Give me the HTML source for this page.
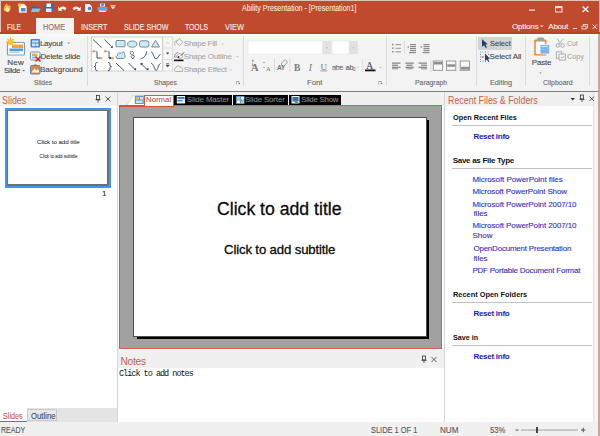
<!DOCTYPE html>
<html><head><meta charset="utf-8">
<style>
*{margin:0;padding:0;box-sizing:border-box}
html,body{width:600px;height:436px;overflow:hidden;background:#f0f0f0;font-family:"Liberation Sans",sans-serif}
.a{position:absolute}
.t{position:absolute;white-space:nowrap;line-height:1;-webkit-text-stroke:0.1px currentColor}
svg{position:absolute;overflow:visible}
</style></head><body>
<div class="a" style="left:0px;top:0px;width:600px;height:34px;background:#bf4a2e;"></div>
<div class="a" style="left:0px;top:0px;width:600px;height:1px;background:#e3c2b8;"></div>
<div class="a" style="left:0px;top:0px;width:1px;height:34px;background:#e3c2b8;"></div>
<div class="a" style="left:599px;top:0px;width:1px;height:34px;background:#dcb2a6;"></div>
<div class="a" style="left:36px;top:18px;width:38px;height:16px;background:#f3f3f3;"></div>
<div class="t" style="left:242.00px;top:4.00px;font-family:'Liberation Sans',sans-serif;font-size:8.5px;letter-spacing:0.000px;color:#f8e6df;transform:scaleX(0.8320);transform-origin:0 0">Ability Presentation - [Presentation1]</div>
<div class="t" style="left:7.24px;top:23.00px;font-family:'Liberation Sans',sans-serif;font-size:8.7px;letter-spacing:0.000px;color:#fdf0ea;transform:scaleX(0.7648);transform-origin:0 0">FILE</div>
<div class="t" style="left:43.15px;top:23.00px;font-family:'Liberation Sans',sans-serif;font-size:8.7px;letter-spacing:0.000px;color:#8d6a6e;transform:scaleX(0.8486);transform-origin:0 0">HOME</div>
<div class="t" style="left:81.17px;top:23.00px;font-family:'Liberation Sans',sans-serif;font-size:8.7px;letter-spacing:0.000px;color:#fdf0ea;transform:scaleX(0.8317);transform-origin:0 0">INSERT</div>
<div class="t" style="left:123.69px;top:23.00px;font-family:'Liberation Sans',sans-serif;font-size:8.7px;letter-spacing:0.000px;color:#fdf0ea;transform:scaleX(0.8148);transform-origin:0 0">SLIDE SHOW</div>
<div class="t" style="left:185.30px;top:23.00px;font-family:'Liberation Sans',sans-serif;font-size:8.7px;letter-spacing:0.000px;color:#fdf0ea;transform:scaleX(0.7855);transform-origin:0 0">TOOLS</div>
<div class="t" style="left:225.30px;top:23.00px;font-family:'Liberation Sans',sans-serif;font-size:8.7px;letter-spacing:0.000px;color:#fdf0ea;transform:scaleX(0.8539);transform-origin:0 0">VIEW</div>
<div class="t" style="left:512.00px;top:22.50px;font-family:'Liberation Sans',sans-serif;font-size:8px;letter-spacing:-0.150px;color:#fdf0ea">Options</div>
<div class="t" style="left:548.30px;top:22.50px;font-family:'Liberation Sans',sans-serif;font-size:8px;letter-spacing:-0.250px;color:#fdf0ea">About</div>
<div class="a" style="left:0px;top:34px;width:600px;height:57px;background:linear-gradient(#fbfbfb,#f3f3f3 6px,#f3f3f3);"></div>
<div class="a" style="left:74px;top:32px;width:526px;height:2px;background:#b9441f;"></div>
<div class="a" style="left:0px;top:32px;width:36px;height:2px;background:#b9441f;"></div>
<div class="a" style="left:0px;top:91px;width:600px;height:1px;background:#7d7d7d;"></div>
<div class="a" style="left:87px;top:36px;width:1px;height:50px;background:#dcdcdc;"></div>
<div class="a" style="left:243px;top:36px;width:1px;height:50px;background:#dcdcdc;"></div>
<div class="a" style="left:386px;top:36px;width:1px;height:50px;background:#dcdcdc;"></div>
<div class="a" style="left:476px;top:36px;width:1px;height:50px;background:#dcdcdc;"></div>
<div class="a" style="left:525px;top:36px;width:1px;height:50px;background:#dcdcdc;"></div>
<div class="a" style="left:589px;top:36px;width:1px;height:50px;background:#dcdcdc;"></div>
<div class="a" style="left:478px;top:37px;width:34px;height:13px;background:#d3d3d3;"></div>
<div class="t" style="left:7.30px;top:59.30px;font-family:'Liberation Sans',sans-serif;font-size:8px;letter-spacing:0.250px;color:#444">New</div>
<div class="t" style="left:3.90px;top:66.80px;font-family:'Liberation Sans',sans-serif;font-size:8px;letter-spacing:-0.300px;color:#444">Slide</div>
<div class="t" style="left:39.90px;top:39.90px;font-family:'Liberation Sans',sans-serif;font-size:8px;letter-spacing:-0.260px;color:#444">Layout</div>
<div class="t" style="left:40.50px;top:52.80px;font-family:'Liberation Sans',sans-serif;font-size:8px;letter-spacing:-0.164px;color:#444">Delete slide</div>
<div class="t" style="left:40.00px;top:65.60px;font-family:'Liberation Sans',sans-serif;font-size:8px;letter-spacing:0.000px;color:#444">Background</div>
<div class="t" style="left:34.15px;top:78.80px;font-family:'Liberation Sans',sans-serif;font-size:7.8px;letter-spacing:0.000px;color:#666;transform:scaleX(0.8500);transform-origin:0 0">Slides</div>
<div class="t" style="left:183.80px;top:40.00px;font-family:'Liberation Sans',sans-serif;font-size:8px;letter-spacing:-0.255px;color:#a8a8a8">Shape Fill</div>
<div class="t" style="left:183.80px;top:53.00px;font-family:'Liberation Sans',sans-serif;font-size:8px;letter-spacing:-0.217px;color:#a8a8a8">Shape Outline</div>
<div class="t" style="left:183.80px;top:66.30px;font-family:'Liberation Sans',sans-serif;font-size:8px;letter-spacing:-0.236px;color:#a8a8a8">Shape Effect</div>
<div class="t" style="left:153.94px;top:78.80px;font-family:'Liberation Sans',sans-serif;font-size:7.8px;letter-spacing:0.000px;color:#666;transform:scaleX(0.8629);transform-origin:0 0">Shapes</div>
<div class="t" style="left:307.00px;top:78.90px;font-family:'Liberation Sans',sans-serif;font-size:7.8px;letter-spacing:-0.100px;color:#666">Font</div>
<div class="t" style="left:414.62px;top:78.90px;font-family:'Liberation Sans',sans-serif;font-size:7.8px;letter-spacing:0.000px;color:#666;transform:scaleX(0.8814);transform-origin:0 0">Paragraph</div>
<div class="t" style="left:489.67px;top:40.00px;font-family:'Liberation Sans',sans-serif;font-size:8px;letter-spacing:0.000px;color:#444;transform:scaleX(0.9327);transform-origin:0 0">Select</div>
<div class="t" style="left:489.60px;top:53.00px;font-family:'Liberation Sans',sans-serif;font-size:8px;letter-spacing:-0.123px;color:#444">Select All</div>
<div class="t" style="left:489.67px;top:78.80px;font-family:'Liberation Sans',sans-serif;font-size:7.8px;letter-spacing:0.000px;color:#666;transform:scaleX(0.9278);transform-origin:0 0">Editing</div>
<div class="t" style="left:531.80px;top:59.00px;font-family:'Liberation Sans',sans-serif;font-size:8px;letter-spacing:-0.200px;color:#444">Paste</div>
<div class="t" style="left:566.90px;top:40.00px;font-family:'Liberation Sans',sans-serif;font-size:8px;letter-spacing:0.000px;color:#a8a8a8;transform:scaleX(0.8571);transform-origin:0 0">Cut</div>
<div class="t" style="left:566.90px;top:53.00px;font-family:'Liberation Sans',sans-serif;font-size:8px;letter-spacing:0.000px;color:#a8a8a8;transform:scaleX(0.9033);transform-origin:0 0">Copy</div>
<div class="t" style="left:543.20px;top:78.80px;font-family:'Liberation Sans',sans-serif;font-size:7.8px;letter-spacing:0.000px;color:#666;transform:scaleX(0.8896);transform-origin:0 0">Clipboard</div>
<div class="a" style="left:0px;top:92px;width:117px;height:14px;background:#f0f0f0;"></div>
<div class="a" style="left:0px;top:106px;width:117px;height:302px;background:#ffffff;"></div>
<div class="a" style="left:117px;top:92px;width:1px;height:330px;background:#d6d6d6;"></div>
<div class="t" style="left:2.33px;top:95.60px;font-family:'Liberation Sans',sans-serif;font-size:10.2px;letter-spacing:0.000px;color:#c4624c;-webkit-text-stroke:0;transform:scaleX(0.8731);transform-origin:0 0">Slides</div>
<div class="a" style="left:5px;top:108px;width:106px;height:80px;background:#ffffff;border:2px solid #3d97f0;box-sizing:border-box"></div>
<div class="a" style="left:7px;top:110px;width:102px;height:76px;background:#ffffff;border:1px solid #707070;border-right-width:2px;border-bottom-width:2px;box-sizing:border-box"></div>
<div class="t" style="left:37.00px;top:138.60px;font-family:'Liberation Sans',sans-serif;font-size:6.2px;letter-spacing:-0.059px;color:#111;-webkit-text-stroke:0">Click to add title</div>
<div class="t" style="left:39.60px;top:154.60px;font-family:'Liberation Sans',sans-serif;font-size:4.6px;letter-spacing:-0.095px;color:#111;-webkit-text-stroke:0">Click to add subtitle</div>
<div class="t" style="left:102.00px;top:190.00px;font-family:'Liberation Sans',sans-serif;font-size:8px;letter-spacing:0.000px;color:#222">1</div>
<div class="a" style="left:0px;top:408px;width:117px;height:14px;background:#e4e4e4;"></div>
<div class="a" style="left:0px;top:408px;width:27px;height:14px;background:#ffffff;"></div>
<div class="a" style="left:0px;top:421px;width:27px;height:1px;background:#d6532f;"></div>
<div class="a" style="left:27px;top:409px;width:30px;height:12px;background:#e8e8e8;border:1px solid #c8c8c8;box-sizing:border-box"></div>
<div class="t" style="left:2.64px;top:412.00px;font-family:'Liberation Sans',sans-serif;font-size:8.4px;letter-spacing:0.000px;color:#c4624c;transform:scaleX(0.8636);transform-origin:0 0">Slides</div>
<div class="t" style="left:30.50px;top:412.00px;font-family:'Liberation Sans',sans-serif;font-size:8.4px;letter-spacing:0.000px;color:#444;transform:scaleX(0.9231);transform-origin:0 0">Outline</div>
<div class="a" style="left:118px;top:92px;width:326px;height:13px;background:#f0f0f0;"></div>
<div class="a" style="left:118px;top:105px;width:326px;height:317px;background:#ffffff;"></div>
<div class="a" style="left:119px;top:105px;width:323px;height:244px;background:#a1a1a1;border:1px solid #cf6352;box-sizing:border-box"></div>
<div class="a" style="left:119px;top:105px;width:55px;height:2px;background:#dd5030;"></div>
<div class="a" style="left:119px;top:105px;width:1px;height:244px;background:#d9583c;"></div>
<div class="a" style="left:137px;top:120px;width:292px;height:219px;background:#000000;"></div>
<div class="a" style="left:133px;top:117px;width:294px;height:220px;background:#ffffff;border:1px solid #505050;box-sizing:border-box"></div>
<div class="t" style="left:217.05px;top:200.10px;font-family:'Liberation Sans',sans-serif;font-size:18.5px;letter-spacing:0.000px;color:#0a0a0a;-webkit-text-stroke:0.3px currentColor;transform:scaleX(0.9535);transform-origin:0 0">Click to add title</div>
<div class="t" style="left:224.00px;top:242.60px;font-family:'Liberation Sans',sans-serif;font-size:13.2px;letter-spacing:-0.145px;color:#0a0a0a;-webkit-text-stroke:0.3px currentColor">Click to add subtitle</div>
<div class="a" style="left:118px;top:350px;width:326px;height:18px;background:#f0f0f0;"></div>
<div class="t" style="left:120.50px;top:356.50px;font-family:'Liberation Sans',sans-serif;font-size:10.2px;letter-spacing:-0.250px;color:#c4624c;-webkit-text-stroke:0">Notes</div>
<div class="t" style="left:119.00px;top:369.60px;font-family:'Liberation Mono',monospace;font-size:8.5px;letter-spacing:-1.000px;color:#111;-webkit-text-stroke:0">Click to add notes</div>
<div class="a" style="left:444px;top:92px;width:1px;height:330px;background:#d6d6d6;"></div>
<div class="a" style="left:144px;top:95px;width:30px;height:11px;background:#ffffff;border:1px solid #d65a3c;border-bottom:none;box-sizing:border-box"></div>
<div class="a" style="left:174px;top:95px;width:58px;height:10px;background:#000000;"></div>
<div class="a" style="left:233px;top:95px;width:55px;height:10px;background:#000000;"></div>
<div class="a" style="left:289px;top:95px;width:52px;height:10px;background:#000000;"></div>
<div class="t" style="left:146.00px;top:96.00px;font-family:'Liberation Sans',sans-serif;font-size:7.8px;letter-spacing:0.000px;color:#c0573f">Normal</div>
<div class="t" style="left:187.00px;top:96.00px;font-family:'Liberation Sans',sans-serif;font-size:7.8px;letter-spacing:-0.101px;color:#8a8a8a">Slide Master</div>
<div class="t" style="left:245.00px;top:96.00px;font-family:'Liberation Sans',sans-serif;font-size:7.8px;letter-spacing:-0.091px;color:#8a8a8a">Slide Sorter</div>
<div class="t" style="left:301.30px;top:96.00px;font-family:'Liberation Sans',sans-serif;font-size:7.8px;letter-spacing:-0.201px;color:#8a8a8a">Slide Show</div>
<div class="a" style="left:445px;top:92px;width:148px;height:14px;background:#f0f0f0;"></div>
<div class="a" style="left:445px;top:106px;width:148px;height:316px;background:#ffffff;"></div>
<div class="a" style="left:593px;top:92px;width:1px;height:330px;background:#e0e0e0;"></div>
<div class="a" style="left:594px;top:92px;width:5px;height:330px;background:#f7f3ee;"></div>
<div class="t" style="left:448.43px;top:95.50px;font-family:'Liberation Sans',sans-serif;font-size:10.2px;letter-spacing:0.000px;color:#c4624c;-webkit-text-stroke:0;transform:scaleX(0.8705);transform-origin:0 0">Recent Files &amp; Folders</div>
<div class="a" style="left:452px;top:125px;width:140px;height:1px;background:#c2c2c2;"></div>
<div class="a" style="left:452px;top:168px;width:140px;height:1px;background:#c2c2c2;"></div>
<div class="a" style="left:452px;top:302px;width:140px;height:1px;background:#c2c2c2;"></div>
<div class="a" style="left:452px;top:345px;width:140px;height:1px;background:#c2c2c2;"></div>
<div class="t" style="left:452.80px;top:113.70px;font-family:'Liberation Sans',sans-serif;font-size:8px;letter-spacing:0.000px;color:#111;font-weight:bold;-webkit-text-stroke:0;transform:scaleX(0.9143);transform-origin:0 0">Open Recent Files</div>
<div class="t" style="left:473.40px;top:133.00px;font-family:'Liberation Sans',sans-serif;font-size:8px;letter-spacing:-0.267px;color:#1b1bc4;font-weight:bold;-webkit-text-stroke:0">Reset info</div>
<div class="t" style="left:452.70px;top:157.00px;font-family:'Liberation Sans',sans-serif;font-size:8px;letter-spacing:-0.281px;color:#111;font-weight:bold;-webkit-text-stroke:0">Save as File Type</div>
<div class="t" style="left:472.40px;top:175.70px;font-family:'Liberation Sans',sans-serif;font-size:8px;letter-spacing:-0.068px;color:#2f2fc0">Microsoft PowerPoint files</div>
<div class="t" style="left:472.40px;top:187.80px;font-family:'Liberation Sans',sans-serif;font-size:8px;letter-spacing:-0.134px;color:#2f2fc0">Microsoft PowerPoint Show</div>
<div class="t" style="left:472.40px;top:200.50px;font-family:'Liberation Sans',sans-serif;font-size:8px;letter-spacing:-0.096px;color:#2f2fc0">Microsoft PowerPoint 2007/10</div>
<div class="t" style="left:473.40px;top:210.00px;font-family:'Liberation Sans',sans-serif;font-size:8px;letter-spacing:0.000px;color:#2f2fc0">files</div>
<div class="t" style="left:472.40px;top:222.40px;font-family:'Liberation Sans',sans-serif;font-size:8px;letter-spacing:-0.096px;color:#2f2fc0">Microsoft PowerPoint 2007/10</div>
<div class="t" style="left:472.40px;top:232.20px;font-family:'Liberation Sans',sans-serif;font-size:8px;letter-spacing:0.000px;color:#2f2fc0">Show</div>
<div class="t" style="left:473.40px;top:244.90px;font-family:'Liberation Sans',sans-serif;font-size:8px;letter-spacing:-0.217px;color:#2f2fc0">OpenDocument Presentation</div>
<div class="t" style="left:473.40px;top:254.70px;font-family:'Liberation Sans',sans-serif;font-size:8px;letter-spacing:0.000px;color:#2f2fc0">files</div>
<div class="t" style="left:472.40px;top:267.00px;font-family:'Liberation Sans',sans-serif;font-size:8px;letter-spacing:-0.230px;color:#2f2fc0">PDF Portable Document Format</div>
<div class="t" style="left:452.70px;top:290.60px;font-family:'Liberation Sans',sans-serif;font-size:8px;letter-spacing:0.000px;color:#111;font-weight:bold;-webkit-text-stroke:0;transform:scaleX(0.9223);transform-origin:0 0">Recent Open Folders</div>
<div class="t" style="left:473.40px;top:310.00px;font-family:'Liberation Sans',sans-serif;font-size:8px;letter-spacing:-0.267px;color:#1b1bc4;font-weight:bold;-webkit-text-stroke:0">Reset info</div>
<div class="t" style="left:452.70px;top:333.80px;font-family:'Liberation Sans',sans-serif;font-size:8px;letter-spacing:0.000px;color:#111;font-weight:bold;-webkit-text-stroke:0;transform:scaleX(0.9004);transform-origin:0 0">Save in</div>
<div class="t" style="left:473.40px;top:353.10px;font-family:'Liberation Sans',sans-serif;font-size:8px;letter-spacing:-0.267px;color:#1b1bc4;font-weight:bold;-webkit-text-stroke:0">Reset info</div>
<div class="a" style="left:0px;top:422px;width:600px;height:14px;background:#f0f0f0;"></div>
<div class="t" style="left:1.19px;top:426.30px;font-family:'Liberation Sans',sans-serif;font-size:8.6px;letter-spacing:0.000px;color:#555;transform:scaleX(0.8140);transform-origin:0 0">READY</div>
<div class="t" style="left:370.73px;top:426.00px;font-family:'Liberation Sans',sans-serif;font-size:8.6px;letter-spacing:0.000px;color:#555;transform:scaleX(0.8671);transform-origin:0 0">SLIDE 1 OF 1</div>
<div class="t" style="left:440.06px;top:426.00px;font-family:'Liberation Sans',sans-serif;font-size:8.6px;letter-spacing:0.000px;color:#555;transform:scaleX(0.9444);transform-origin:0 0">NUM</div>
<div class="t" style="left:490.40px;top:426.00px;font-family:'Liberation Sans',sans-serif;font-size:8.6px;letter-spacing:0.000px;color:#555;transform:scaleX(0.8902);transform-origin:0 0">53%</div>
<div class="a" style="left:598px;top:34px;width:2px;height:402px;background:#c9a79c;"></div>
<svg width="600" height="436" viewBox="0 0 600 436" style="left:0;top:0">
<!-- ===== quick access toolbar ===== -->
<g>
 <path d="M4 11 C3 8 5 5 7 3 C7 6 9 6 10 5 C11 7 11 10 9 12 Z" fill="#f7b23b"/>
 <path d="M5.5 11 C5 9 6.5 7 7.5 6 C8 8 9.5 8 9.5 9 C9.5 10.5 8.5 11.5 7.5 12 Z" fill="#fde9a8"/>
 <path d="M19 4 h5 l2.5 2.5 v6 h-7.5 z" fill="#fdfdfd" stroke="#d8d8d8" stroke-width="0.5"/>
 <rect x="21" y="8" width="4.5" height="3.5" fill="#4d8fd6"/>
 <circle cx="19.5" cy="5" r="1.8" fill="#f6c43c"/>
 <path d="M31 6 h3 l1 1 h5 v5 h-9 z" fill="#2e6ea6"/>
 <path d="M32 8.5 h8.5 l-1.5 3.5 h-8 z" fill="#7cc3ee"/>
 <rect x="44.5" y="3.5" width="8.5" height="8.5" fill="#2f6fb5"/>
 <rect x="46.5" y="3.5" width="4.5" height="3.5" fill="#ffffff"/>
 <rect x="46" y="8.5" width="5.5" height="3.5" fill="#dfeefa"/>
 <path d="M59 9.5 C60 6 64 5.5 66.5 8 L65 10.5 C63.5 8.5 61.5 8.5 60.5 10.5 Z" fill="#f2f2f2"/>
 <path d="M58 6.5 L58.5 11 L62.5 10.5 Z" fill="#f2f2f2"/>
 <path d="M80 9.5 C79 6 75 5.5 72.5 8 L74 10.5 C75.5 8.5 77.5 8.5 78.5 10.5 Z" fill="#f2f2f2"/>
 <path d="M81 6.5 L80.5 11 L76.5 10.5 Z" fill="#f2f2f2"/>
 <path d="M85 4 h4.5 l2 2 v6 h-6.5 z" fill="#fafafa"/>
 <circle cx="89.5" cy="8.5" r="2.3" fill="#3b8ed4" stroke="#ffffff" stroke-width="0.8"/>
 <rect x="100" y="3.5" width="5" height="3" fill="#ffffff"/>
 <circle cx="102.5" cy="4.5" r="1.8" fill="#4e9ad8"/>
 <path d="M97.5 7 h10 v3.5 h-10 z" fill="#5aa6df"/>
 <path d="M98.5 10.5 h8 l-1 1.5 h-6 z" fill="#e8f2fa"/>
 <path d="M110.5 6.5 h5 l-2.5 3 z" fill="#f4e4de"/>
 <rect x="110.5" y="5" width="5" height="0.8" fill="#f4e4de"/>
</g>
<!-- window controls -->
<rect x="529" y="9.5" width="6" height="1.2" fill="#f6e6e0"/>
<rect x="555.5" y="6.5" width="6.5" height="5.5" fill="none" stroke="#f6e6e0" stroke-width="1"/>
<rect x="555.5" y="6.5" width="6.5" height="1.6" fill="#f6e6e0"/>
<path d="M582.5 6.5 L588.5 12 M588.5 6.5 L582.5 12" stroke="#fbf0ec" stroke-width="1.5"/>
<path d="M540 25.5 h3.5 l-1.75 2 z" fill="#f6e6e0"/>
<rect x="573" y="28" width="4" height="1" fill="#f6e6e0"/>
<rect x="583.5" y="24.5" width="4" height="3.5" fill="none" stroke="#f6e6e0" stroke-width="0.8"/>
<rect x="582" y="26" width="4" height="3" fill="#bf4a2e" stroke="#f6e6e0" stroke-width="0.8"/>
<path d="M592.5 24.5 L597 29 M597 24.5 L592.5 29" stroke="#f6e6e0" stroke-width="1"/>

<!-- ===== Slides group ===== -->
<rect x="7.5" y="42.5" width="17" height="12.5" rx="1" fill="#ffffff" stroke="#7a9cc2" stroke-width="1.2"/>
<rect x="12" y="44.5" width="11" height="3.5" fill="#f3a23c"/>
<rect x="9.5" y="48.5" width="13.5" height="2.6" fill="#4f9be0"/>
<rect x="9.5" y="51.5" width="10" height="1.5" fill="#a9d0f0"/>
<circle cx="10.5" cy="42" r="3" fill="#f9c52f"/>
<path d="M10.5 37.5 v1.6 M6 42 h1.6 M7.4 38.9 l1.1 1.1 M13.6 38.9 l-1.1 1.1 M7.4 45.1 l1.1 -1.1 M15 42 h-1.6" stroke="#f29a1f" stroke-width="1"/>
<path d="M22.5 70 h2.5 l-1.25 1.5 z" fill="#666"/>
<!-- layout -->
<rect x="30.5" y="39" width="9.5" height="8.5" rx="0.8" fill="#3f8bd0"/>
<rect x="32" y="40.5" width="6.5" height="2" fill="#cfe6f8"/>
<rect x="32" y="43.5" width="3" height="2.6" fill="#cfe6f8"/>
<rect x="35.5" y="43.5" width="3" height="2.6" fill="#cfe6f8"/>
<path d="M67.5 42.5 h2.5 l-1.25 1.5 z" fill="#777"/>
<!-- delete slide -->
<rect x="30.5" y="52" width="9.5" height="8" rx="0.8" fill="#ffffff" stroke="#6a8fb5" stroke-width="1"/>
<rect x="32" y="53.5" width="5.5" height="2.5" fill="#f5a54a"/>
<rect x="32" y="56.5" width="4" height="2" fill="#7fb4e2"/>
<path d="M35.5 56.5 L40.5 61.5 M40.5 56.5 L35.5 61.5" stroke="#e0201b" stroke-width="1.4"/>
<!-- background -->
<rect x="30.5" y="65.5" width="9.5" height="8.5" rx="1" fill="#e9853a" stroke="#5f88b5" stroke-width="1"/>
<path d="M31.5 72.5 L34.5 68.5 L36.5 70.5 L38 69 L39.5 72.5 Z" fill="#ffffff"/>
<rect x="33.5" y="64.5" width="3.5" height="1.6" fill="#5f88b5"/>

<!-- ===== Shapes gallery ===== -->
<rect x="91.5" y="37" width="71" height="34" fill="#ffffff" stroke="#cfcfcf" stroke-width="1"/>
<rect x="163" y="37" width="9.5" height="34" fill="#f7f7f7" stroke="#d6d6d6" stroke-width="0.8"/>
<path d="M163 48 h9.5 M163 59.5 h9.5" stroke="#d6d6d6" stroke-width="0.8"/>
<path d="M166.5 43.5 l1.2 -1.3 l1.2 1.3" fill="none" stroke="#b0b0b0" stroke-width="0.7"/>
<path d="M166 52.5 h3.3 l-1.65 2 z" fill="#333"/>
<path d="M166 63.5 h3.3 M166 65 h3.3 l-1.65 2 z" stroke="#444" stroke-width="0.6" fill="#444"/>
<g stroke="#27445e" stroke-width="0.9" fill="none">
 <path d="M93 39.5 L101.5 47.5"/>
 <path d="M104.5 39.5 L111.5 46.5"/>
 <path d="M97 51.5 v6.5 h4"/>
 <path d="M109 51.5 v6.5 h2"/>
 <path d="M97.5 62.5 c-1.5 0 -2 0.5 -2 1.8 v1.5 c0 0.6 -0.6 0.7 -1.5 0.8 c0.9 0.1 1.5 0.2 1.5 0.8 v1.5 c0 1.3 0.5 1.8 2 1.8"/>
 <path d="M108 62.5 c1.5 0 2 0.5 2 1.8 v1.5 c0 0.6 0.6 0.7 1.5 0.8 c-0.9 0.1 -1.5 0.2 -1.5 0.8 v1.5 c0 1.3 -0.5 1.8 -2 1.8"/>
 <path d="M116 63 L124 70.5"/>
 <path d="M128.5 63 L135 69.5"/>
 <path d="M141.5 64 L147 69.5"/>
 <path d="M140.5 59 C144 58 146.5 55 146.5 51.5"/>
 <path d="M151 52 C153 51.5 154 59 156 59 C158 59 158 55 160.5 54.5"/>
 <path d="M151 63 C153 63 155 70.5 156 70.5 C157.5 70.5 158.5 64 160.5 63.5"/>
</g>
<path d="M110.5 47.8 L112.8 48 L112.5 45.5 Z" fill="#1f3b57"/>
<path d="M135.8 70.6 L136.2 68 L133.8 69 Z" fill="#1f3b57"/>
<path d="M148.2 70.6 L148.5 68 L146 69 Z" fill="#1f3b57"/>
<path d="M140.5 63 L143.2 63.2 L141 65.5 Z" fill="#1f3b57"/>
<path d="M112 58 L109.5 56.5 L109.5 59.5 Z" fill="#1f3b57"/>
<g fill="#f0a040"><circle cx="93.5" cy="51.3" r="1.2"/><circle cx="101" cy="58.3" r="1.2"/><circle cx="105.2" cy="51.3" r="1.2"/><circle cx="112.5" cy="58.3" r="1.2"/></g>
<path d="M93.5 51.3 h3.5" stroke="#7a98b8" stroke-width="0.8"/>
<path d="M105.2 51.3 h3.8" stroke="#7a98b8" stroke-width="0.8"/>
<g stroke="#6f7f8c" stroke-width="0.9" fill="#c7ecf6">
 <rect x="116" y="40.5" width="9" height="6.3" rx="0.5"/>
 <ellipse cx="132.2" cy="44.1" rx="4.6" ry="3.1"/>
 <rect x="139.5" y="40.8" width="9.4" height="6.3" rx="2"/>
 <path d="M155.5 40.3 L159.5 47 H151.6 Z"/>
 <path d="M117 58.5 C115.5 58 116 55.5 117.5 55.5 C117.5 53 120 52 121 53.5 C122.5 51 125.5 52 124.5 54.5 C126 55.5 125 59 123 58.5 Z"/>
</g>
<path d="M130 52.5 C131 50.5 134 51 133.5 53.5 L132.5 55 L134.5 56 L133 59 L131 56.5 L132 55.5 C131 54.5 130.5 53.5 130 52.5 Z" fill="none" stroke="#3e4e5c" stroke-width="0.8"/>
<!-- shape fill/outline/effect icons -->
<g fill="none" stroke="#a9a9a9" stroke-width="0.9">
 <path d="M176 42 L179.5 38.8 L183 42.3 L179.5 45.6 Z"/>
 <path d="M175.5 45.5 C174 44 174.5 41 177 40"/>
 <path d="M176 56.5 L179.5 53 L183 56.5 L180 59 Z"/>
 <path d="M175 58 C174 55 175.5 53 178 52.5" stroke="#777"/>
 <path d="M175.5 71.5 C173.5 71.5 173.8 68 176 68 C176 65.5 179 65 180 67 C182 66.5 183.5 69 182.5 71.5 Z"/>
</g>
<path d="M181 55.5 L184 52.5" stroke="#333" stroke-width="0.9"/>
<circle cx="178.5" cy="57" r="1" fill="#333"/>
<rect x="174" y="59.6" width="9.5" height="1.6" fill="#111"/>
<g fill="#b9b9b9">
 <path d="M221.5 43.5 h2.4 l-1.2 1.4 z"/>
 <path d="M236.2 56.3 h2.4 l-1.2 1.4 z"/>
 <path d="M229.5 69.5 h2.4 l-1.2 1.4 z"/>
</g>
<!-- dialog launchers -->
<g fill="none" stroke="#8a8a8a" stroke-width="0.7">
 <path d="M236.5 84.5 v-3 h3"/><path d="M378.8 84.5 v-3 h3"/>
</g>
<g fill="#555"><path d="M238 82.8 l1.8 0 l0 1.8 z"/><path d="M380.3 82.8 l1.8 0 l0 1.8 z"/></g>

<!-- ===== Font group ===== -->
<rect x="248" y="41" width="74.5" height="13" fill="#ffffff" stroke="#e6e6e6" stroke-width="0.6"/>
<rect x="322.5" y="41" width="9" height="13" fill="#e2e2e2"/>
<rect x="332" y="41" width="17" height="13" fill="#ffffff" stroke="#e6e6e6" stroke-width="0.6"/>
<rect x="349" y="41" width="9" height="13" fill="#e2e2e2"/>
<path d="M325.8 47.2 h2.4 l-1.2 1.2 z M352.3 47.2 h2.4 l-1.2 1.2 z" fill="#b5b5b5"/>
<g fill="#777" font-family="Liberation Serif" font-weight="bold">
 <text x="251" y="70.8" font-size="10.5">A</text>
 <text x="266" y="70.6" font-size="6.5" font-weight="normal">A</text>
 <text x="294" y="70.5" font-size="9.5">B</text>
 <text x="308.8" y="70.5" font-size="9.5" font-style="italic" font-weight="normal">I</text>
 <text x="320.5" y="69.5" font-size="9" font-weight="normal">U</text>
 <text x="366" y="69" font-size="10" font-weight="normal" fill="#444">A</text>
</g>
<rect x="320.5" y="70.5" width="6.5" height="0.8" fill="#888"/>
<rect x="365" y="69.5" width="10.5" height="1.8" fill="#111"/>
<path d="M379.5 67 h2.2 l-1.1 1.2 z M357 66.7 h2 l-1 1.1 z" fill="#aaa"/>
<g fill="#999">
 <path d="M251.5 61 l1.3 -1.5 l1.3 1.5 z"/><rect x="252.3" y="61" width="1" height="1.5"/>
 <path d="M251.5 65 l1.3 1.5 l1.3 -1.5 z"/><rect x="252.3" y="63.5" width="1" height="1.5"/>
 <path d="M262.8 62 l1.2 1.2 l1.2 -1.2 z M262.8 68 l1.2 -1.2 l1.2 1.2 z"/>
</g>
<text x="332" y="69.8" font-family="Liberation Sans" font-size="7.5" fill="#777" letter-spacing="-0.6">abe</text>
<rect x="332" y="66.4" width="10.5" height="0.7" fill="#777"/>
<text x="345.5" y="69.8" font-family="Liberation Sans" font-size="7.5" font-weight="bold" fill="#777" letter-spacing="-0.5">ab</text>
<text x="353" y="71" font-family="Liberation Sans" font-size="5" fill="#777">2</text>
<g fill="#777">
 <text x="277" y="70" font-family="Liberation Sans" font-weight="bold" font-size="6.5" letter-spacing="-0.3">AY</text>
</g>
<path d="M281 64 L285 59.5 L287.5 62 L283.5 66.5 Z" fill="none" stroke="#888" stroke-width="0.8"/>
<rect x="274" y="58" width="0.8" height="14" fill="#d4d4d4"/>
<rect x="289.5" y="58" width="0.8" height="14" fill="#d4d4d4"/>
<rect x="362.3" y="59" width="0.8" height="13" fill="#d4d4d4"/>

<!-- ===== Paragraph group ===== -->
<g fill="#8a8a8a">
 <rect x="392" y="43.8" width="1.5" height="1.5"/><rect x="392" y="47.4" width="1.5" height="1.5"/><rect x="392" y="51" width="1.5" height="1.5"/>
 <rect x="395.5" y="44.2" width="5.5" height="0.9"/><rect x="395.5" y="47.8" width="5.5" height="0.9"/><rect x="395.5" y="51.4" width="5.5" height="0.9"/>
 <rect x="410" y="44" width="6" height="1.2"/><rect x="410" y="46" width="6" height="1.2"/><rect x="410" y="48" width="6" height="1.2"/><rect x="410" y="50" width="6" height="1.2"/><rect x="409" y="52" width="7" height="1.2"/>
 <path d="M407 47 l1.8 -1.3 v2.6 z"/>
 <rect x="423.5" y="44" width="6" height="1.2"/><rect x="423.5" y="46" width="6" height="1.2"/><rect x="423.5" y="48" width="6" height="1.2"/><rect x="423.5" y="50" width="6" height="1.2"/><rect x="422.5" y="52" width="7" height="1.2"/>
 <path d="M422.5 47 l-1.8 -1.3 v2.6 z"/>
 <rect x="392" y="62.5" width="8.5" height="1.3"/><rect x="392" y="64.6" width="6" height="1.3"/><rect x="392" y="66.7" width="8.5" height="1.3"/><rect x="392" y="68.3" width="6" height="1"/>
 <rect x="405.3" y="62.5" width="8.5" height="1.3"/><rect x="406.5" y="64.6" width="6" height="1.3"/><rect x="405.3" y="66.7" width="8.5" height="1.3"/><rect x="406.5" y="68.3" width="6" height="1"/>
 <rect x="418.5" y="62.5" width="8.5" height="1.3"/><rect x="421" y="64.6" width="6" height="1.3"/><rect x="418.5" y="66.7" width="8.5" height="1.3"/><rect x="421" y="68.3" width="6" height="1"/>
</g>
<rect x="403.8" y="41" width="0.8" height="13" fill="#d4d4d4"/>
<rect x="430.5" y="60" width="0.8" height="12" fill="#d4d4d4"/>
<g fill="#f7f7f7" stroke="#8f8f8f" stroke-width="0.9">
 <rect x="433.3" y="61" width="9.3" height="9.3"/>
 <rect x="446.5" y="61" width="9.3" height="9.3"/>
 <rect x="460.2" y="61" width="9.3" height="9.3"/>
</g>
<g fill="#8f8f8f">
 <rect x="434" y="62" width="8" height="2.5"/>
 <rect x="447.2" y="64.3" width="8" height="2.5"/>
 <rect x="461" y="66.8" width="8" height="2.8"/>
</g>

<!-- ===== Editing ===== -->
<path d="M482 39.3 L482 47 L484 45.2 L485.8 48 L487 47.3 L485.4 44.6 L487.8 44.3 Z" fill="#1e3f75"/>
<g fill="#5a9ad8">
 <rect x="480" y="51.5" width="1" height="1"/><rect x="482.5" y="51.5" width="1" height="1"/><rect x="485" y="51.5" width="1" height="1"/><rect x="487.5" y="51.5" width="1" height="1"/>
 <rect x="480" y="54" width="1" height="1"/><rect x="480" y="56.5" width="1" height="1"/><rect x="480" y="59" width="1" height="1"/><rect x="480" y="61" width="1" height="1"/>
 <rect x="482.5" y="61" width="1" height="1"/><rect x="488" y="54" width="1" height="1"/><rect x="485" y="61" width="1" height="1"/>
</g>
<rect x="481.5" y="56" width="2.5" height="2" fill="#f0a040"/>
<path d="M485 53.5 L485 61 L486.8 59.5 L488.3 62 L489.3 61.5 L488 59 L490 58.7 Z" fill="#1e3f75"/>
<!-- ===== Clipboard ===== -->
<rect x="534.2" y="39.5" width="12.3" height="16" rx="1" fill="#ec8a3a"/>
<rect x="535.8" y="41.5" width="9" height="12.5" fill="#ffffff"/>
<rect x="537" y="37.5" width="7" height="3.5" rx="1" fill="#9aa3ab"/>
<rect x="540" y="44.5" width="9.8" height="9.5" fill="#7fb6ea" stroke="#ffffff" stroke-width="0.7"/>
<rect x="541.5" y="46" width="6.5" height="1" fill="#cde3f7"/>
<path d="M539.3 72.6 h2 l-1 1.2 z" fill="#666"/>
<g fill="none" stroke="#a8a8a8" stroke-width="0.9">
 <circle cx="557.8" cy="45.5" r="1.8"/><circle cx="562.5" cy="45.5" r="1.8"/>
 <path d="M558.8 44 L563.5 38.8 M561.5 44 L557 38.8"/>
 <rect x="556.3" y="51.8" width="5.5" height="6.5"/>
 <path d="M559 54 h6.5 v6.2 h-6.5 z" fill="#f3f3f3"/>
 <path d="M561 57 l1.2 1.3 l2 -2.5"/>
</g>

<!-- ===== panel header icons ===== -->
<g fill="none" stroke="#333" stroke-width="0.8">
 <path d="M105.5 96.5 L110.5 101.5 M110.5 96.5 L105.5 101.5"/>
 <path d="M589.5 96.5 L594 101 M594 96.5 L589.5 101"/>
 <path d="M431.5 357 L436.5 362 M436.5 357 L431.5 362"/>
</g>
<g fill="#333">
 <rect x="96.5" y="95.5" width="3" height="4" fill="none" stroke="#333" stroke-width="0.8"/><rect x="95.5" y="99.3" width="5" height="0.9"/><rect x="97.6" y="100" width="0.8" height="2.5"/>
 <rect x="580.5" y="95" width="3" height="4" fill="none" stroke="#333" stroke-width="0.8"/><rect x="579.5" y="98.8" width="5" height="0.9"/><rect x="581.6" y="99.5" width="0.8" height="2.5"/>
 <rect x="422.5" y="356" width="3" height="4" fill="none" stroke="#333" stroke-width="0.8"/><rect x="421.5" y="359.8" width="5" height="0.9"/><rect x="423.6" y="360.5" width="0.8" height="2.5"/>
 <path d="M570.5 98 h4.5 l-2.25 2.5 z"/>
</g>

<!-- ===== center tab icons ===== -->
<path d="M127 105 L133.5 94.5" stroke="#c8c8c8" stroke-width="0.8"/>
<path d="M127.5 105 L134 95 h10 v10 z" fill="#ffffff"/>
<rect x="134.8" y="95.5" width="9" height="8.5" fill="#5b9bd5"/>
<rect x="136" y="97" width="3" height="2.5" fill="#f2c14e"/><rect x="140" y="97" width="3" height="2.5" fill="#cfe3f5"/>
<rect x="136" y="100.5" width="6.5" height="2.5" fill="#cfe3f5"/>
<rect x="176.8" y="96" width="8.3" height="7.5" fill="#e9f2fb"/>
<rect x="177.5" y="97" width="7" height="2" fill="#3f86cf"/><rect x="177.5" y="100" width="5" height="1.3" fill="#3f86cf"/>
<rect x="236" y="96" width="8.5" height="8" fill="#5b9bd5"/>
<rect x="237" y="97" width="3" height="2.5" fill="#f2c14e"/><rect x="241" y="97" width="3" height="2.5" fill="#f7f7f7"/>
<rect x="237" y="100.5" width="3" height="2.5" fill="#f7f7f7"/><rect x="241" y="100.5" width="3" height="2.5" fill="#f2c14e"/>
<rect x="291.5" y="96" width="8" height="7.5" fill="#e9f2fb"/>
<rect x="292.5" y="97" width="6" height="4.5" fill="#3a6ea8"/>
<path d="M295 100 l4 3 l-4 0.8 z" fill="#3fae49"/>
<!-- ===== status slider ===== -->
<rect x="515.5" y="429.5" width="3" height="1" fill="#555"/>
<rect x="521" y="429.6" width="57" height="0.9" fill="#9a9a9a"/>
<rect x="536" y="427" width="2" height="6" fill="#444"/>
<rect x="581" y="429.5" width="4.5" height="1" fill="#555"/>
<rect x="582.75" y="427.75" width="1" height="4.5" fill="#555"/>
</svg>

</body></html>
